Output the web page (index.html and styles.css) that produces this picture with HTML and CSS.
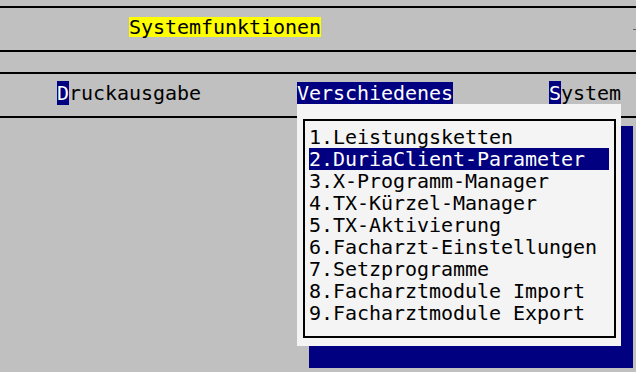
FILE: index.html
```html
<!DOCTYPE html>
<html lang="de">
<head>
<meta charset="utf-8">
<title>Systemfunktionen</title>
<link rel="stylesheet" href="styles.css">
</head>
<body>
<div class="screen">
  <div class="rule"></div>
  <div class="titlebar">
    <span class="title">Systemfunktionen</span>
    <span class="edge" aria-hidden="true"></span>
  </div>
  <div class="rule"></div>
  <div class="spacer"></div>
  <div class="rule"></div>
  <nav class="menubar">
    <span class="mi"><span class="hk">D</span>ruckausgabe</span>
    <span class="mi active">Verschiedenes
      <div class="dropdown">
        <ul class="list">
          <li>1.Leistungsketten</li>
          <li class="sel">2.DuriaClient-Parameter</li>
          <li>3.X-Programm-Manager</li>
          <li>4.TX-Kürzel-Manager</li>
          <li>5.TX-Aktivierung</li>
          <li>6.Facharzt-Einstellungen</li>
          <li>7.Setzprogramme</li>
          <li>8.Facharztmodule Import</li>
          <li>9.Facharztmodule Export</li>
        </ul>
      </div>
    </span>
    <span class="mi"><span class="hk">S</span>ystem</span>
  </nav>
  <div class="rule"></div>
</div>
</body>
</html>
```

FILE: styles.css
```css
html, body {
  margin: 0;
  padding: 0;
}
body {
  background: #c0c0c0;
  width: 636px;
  height: 372px;
  overflow: hidden;
  font-family: "DejaVu Sans Mono", "Liberation Mono", monospace;
  font-size: 20px;
  color: #000;
}
.screen {
  padding-top: 6px;
}
.rule {
  height: 2px;
  background: #000;
}
.titlebar {
  height: 42px;
  box-sizing: border-box;
  padding: 9px 0 0 129px;
  display: flex;
  align-items: flex-start;
  justify-content: space-between;
}
.title {
  display: inline-block;
  height: 20px;
  line-height: 20px;
  background: #ffff00;
  letter-spacing: -0.04px;
}
.edge {
  display: block;
  width: 3px;
  height: 1px;
  margin-top: 12px;
  background: #606060;
}
.spacer {
  height: 20px;
}
.menubar {
  height: 42px;
  box-sizing: border-box;
  padding: 8px 0 0 57px;
  display: flex;
  gap: 96px;
  align-items: flex-start;
}
.mi {
  display: inline-block;
  height: 22px;
  line-height: 22px;
  letter-spacing: -0.04px;
  white-space: nowrap;
}
.hk {
  background: #000080;
  color: #fff;
}
.mi.active {
  position: relative;
  background: #000080;
  color: #fff;
}
.dropdown {
  position: absolute;
  left: 0;
  top: 22px;
  width: 324px;
  height: 242px;
  box-sizing: border-box;
  padding: 15px 5px 8px 6px;
  background: #f4f4f4;
  color: #000;
  box-shadow: 12px 22px 0 #000080;
  z-index: 2;
}
.list {
  list-style: none;
  margin: 0;
  padding: 5px 5px 12px 4px;
  border: 2px solid #000;
}
.list li {
  height: 22px;
  line-height: 22px;
  width: 300px;
}
.list li.sel {
  background: #000080;
  color: #fff;
}
```
